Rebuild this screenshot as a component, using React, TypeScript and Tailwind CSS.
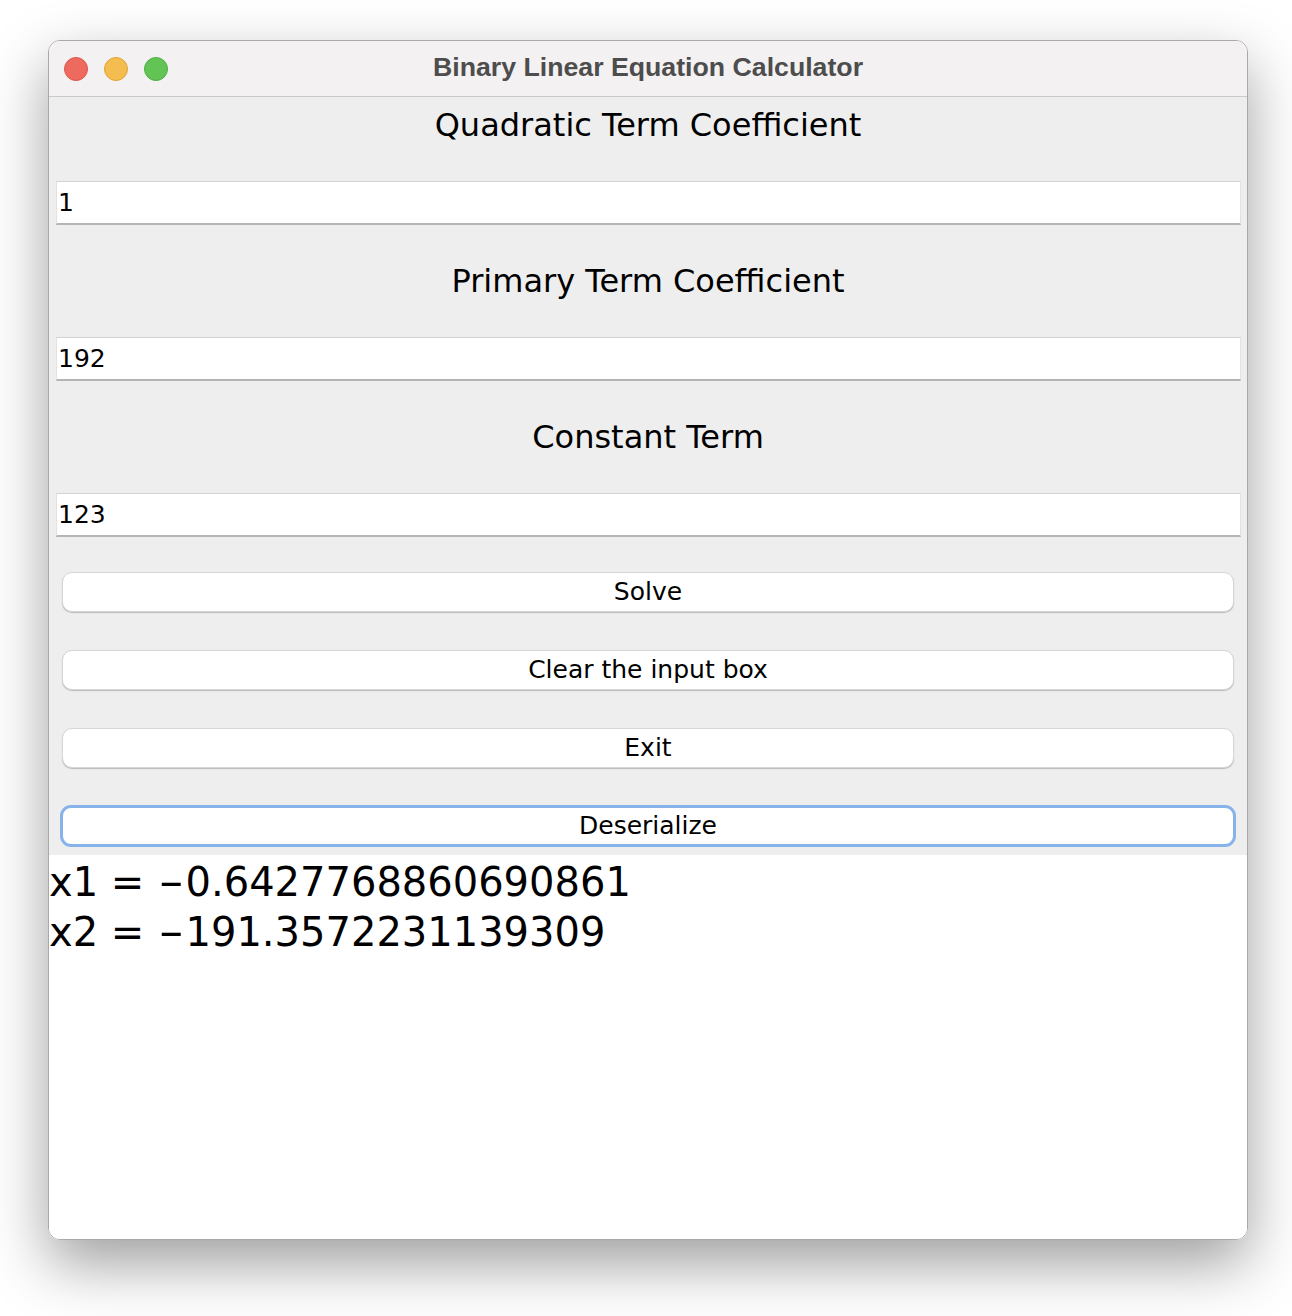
import React from "react";

const font = { fontFamily: '"DejaVu Sans", Verdana, sans-serif' };

function Field({ value }: { value: string }) {
  return (
    <div className="h-[44px] pl-[7px] pr-[6px]">
      <div className="h-full bg-white border-t border-t-[#d2d2d2] border-l border-l-[#e2e2e2] border-r border-r-[#e2e2e2] border-b-2 border-b-[#b4b4b4] flex items-center pl-[1px] text-[25px] text-black">
        {value}
      </div>
    </div>
  );
}

function Label({ text, first }: { text: string; first?: boolean }) {
  return first ? (
    <div className="h-[84px] pt-[8px] text-center text-[32px] leading-[40px] text-black">{text}</div>
  ) : (
    <div className="h-[112px] flex items-center justify-center text-[32px] leading-[40px] text-black">{text}</div>
  );
}

function Button({ text, focused, className }: { text: string; focused?: boolean; className?: string }) {
  return (
    <div
      className={
        focused
          ? "h-[42px] mx-[-2px] rounded-[11px] bg-white border-[3px] border-[#86b3ea] flex items-center justify-center text-[25px] text-black " + (className ?? "")
          : "h-[40px] rounded-[10px] bg-white border border-[#d6d6d6] shadow-[0_1px_1px_rgba(0,0,0,0.22)] flex items-center justify-center text-[25px] text-black " + (className ?? "")
      }
    >
      {text}
    </div>
  );
}

function Dash() {
  return <span className="inline-block scale-x-[1.8] mx-[7px]">-</span>;
}

export default function App() {
  return (
    <div className="w-[1292px] h-[1316px] bg-white pt-[40px] pl-[48px]" style={font}>
      <div className="w-[1200px] h-[1200px] rounded-[12px] overflow-hidden flex flex-col border border-[#a9a9a9] shadow-[0_24px_60px_rgba(0,0,0,0.38)]">
        {/* Title bar */}
        <div className="relative h-[56px] shrink-0 bg-[#f3f1f1] border-b border-b-[#c9c9c9] flex items-center pl-[15px]">
          <div className="flex gap-[16px]">
            <div className="w-[24px] h-[24px] rounded-full bg-[#ee6a5f] border border-[#d9574c]" />
            <div className="w-[24px] h-[24px] rounded-full bg-[#f5bd4f] border border-[#dea43a]" />
            <div className="w-[24px] h-[24px] rounded-full bg-[#61c454] border border-[#4fae43]" />
          </div>
          <div
            className="absolute inset-0 flex items-center justify-center pb-[2px] text-[26.7px] font-bold text-[#4d4d4d]"
            style={{ fontFamily: '"Liberation Sans", Arial, sans-serif' }}
          >
            Binary Linear Equation Calculator
          </div>
        </div>
        {/* Form */}
        <div className="shrink-0 bg-[#eeeeee] flex flex-col pb-[8px]">
          <Label text="Quadratic Term Coefficient" first />
          <Field value="1" />
          <Label text="Primary Term Coefficient" />
          <Field value="192" />
          <Label text="Constant Term" />
          <Field value="123" />
          <div className="px-[13px] flex flex-col">
            <Button text="Solve" className="mt-[35px]" />
            <Button text="Clear the input box" className="mt-[38px]" />
            <Button text="Exit" className="mt-[38px]" />
            <Button text="Deserialize" focused className="mt-[37px]" />
          </div>
        </div>
        {/* Result */}
        <div className="flex-1 bg-white pt-[2px] text-[40px] leading-[50px] text-black">
          <div>
            x1 = <Dash />0.6427768860690861
          </div>
          <div>
            x2 = <Dash />191.3572231139309
          </div>
        </div>
      </div>
    </div>
  );
}
